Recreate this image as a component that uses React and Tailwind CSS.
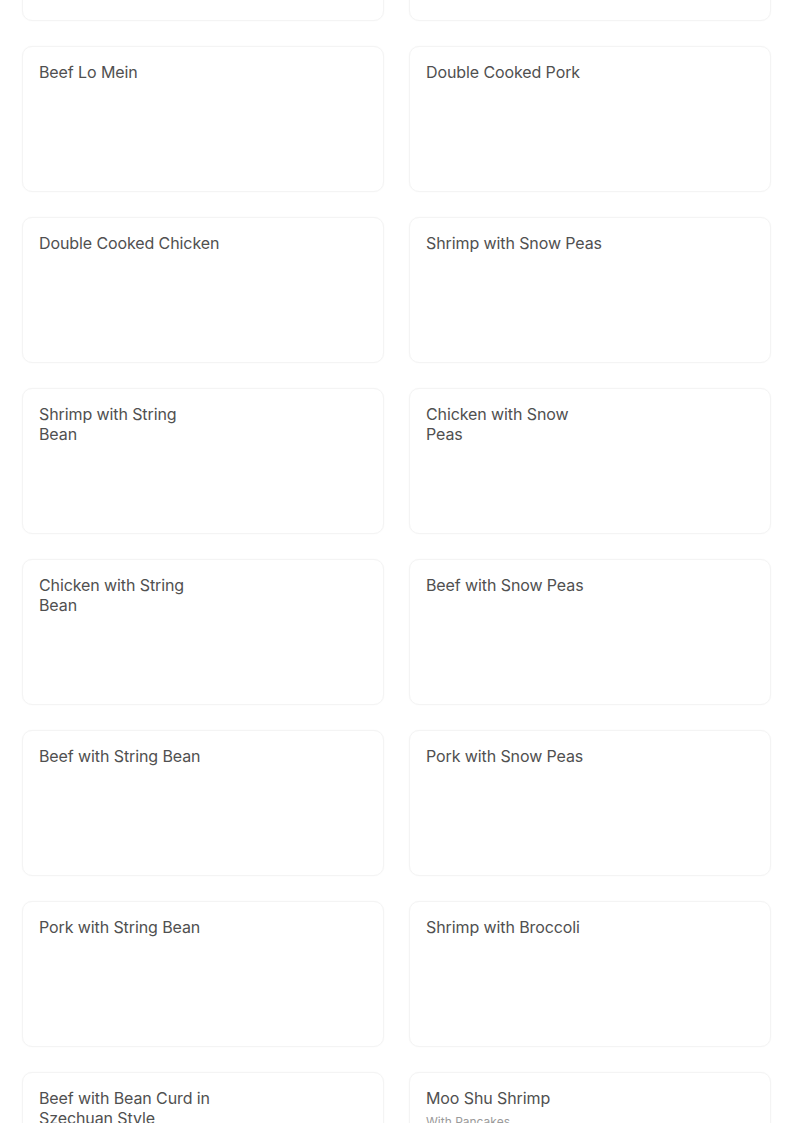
import React from "react";

const rows = [
  [null, null],
  [{ t: ["Beef Lo Mein"] }, { t: ["Double Cooked Pork"] }],
  [{ t: ["Double Cooked Chicken"] }, { t: ["Shrimp with Snow Peas"] }],
  [{ t: ["Shrimp with String", "Bean"] }, { t: ["Chicken with Snow", "Peas"] }],
  [{ t: ["Chicken with String", "Bean"] }, { t: ["Beef with Snow Peas"] }],
  [{ t: ["Beef with String Bean"] }, { t: ["Pork with Snow Peas"] }],
  [{ t: ["Pork with String Bean"] }, { t: ["Shrimp with Broccoli"] }],
  [{ t: ["Beef with Bean Curd in", "Szechuan Style"] }, { t: ["Moo Shu Shrimp"], d: "With Pancakes" }],
];

function Card({ item }) {
  return (
    <div className="h-[146px] rounded-[10px] border border-[#f4f4f4] bg-white px-4 pt-[15px] shadow-[0_0_2px_rgba(0,0,0,0.03)]">
      {item && (
        <>
          <div className="w-[200px] text-[16px] leading-[20px] font-normal tracking-[-0.1px] text-[#505050]">
            {item.t.map((line, i) => (
              <div key={i}>{line}</div>
            ))}
          </div>
          {item.d && <div className="mt-[6px] text-[12px] leading-[16px] text-[#9a9a9a]">{item.d}</div>}
        </>
      )}
    </div>
  );
}

export default function App() {
  return (
    <div className="h-[1123px] overflow-hidden bg-white" style={{ fontFamily: "Inter, 'Liberation Sans', sans-serif" }}>
      <div className="-mt-[125px] grid grid-cols-2 gap-x-[25px] gap-y-[25px] pl-[22px] pr-[33px]">
        {rows.flat().map((item, i) => (
          <Card key={i} item={item} />
        ))}
      </div>
    </div>
  );
}
